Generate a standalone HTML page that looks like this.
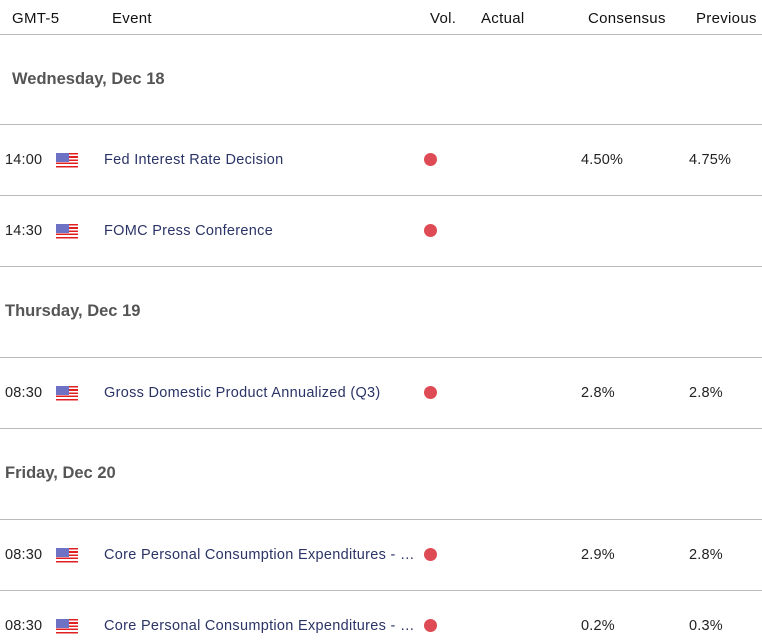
<!DOCTYPE html>
<html><head><meta charset="utf-8"><style>
body{margin:0;width:762px;height:643px;overflow:hidden;background:#fff;font-family:"Liberation Sans",sans-serif;position:relative}
.a{position:absolute;white-space:nowrap}
.h{font-size:15px;color:#111;top:10px;letter-spacing:0.3px}
.ln{position:absolute;left:0;width:762px;height:1px;background:#b9bdbd}
.d{font-size:16.5px;font-weight:bold;color:#555}
.t{font-size:14.5px;color:#222;letter-spacing:0.2px}
.e{font-size:14.5px;color:#2b3466;letter-spacing:0.3px}
.dot{position:absolute;width:13px;height:13px;border-radius:50%;background:#de4b55}
.fl{position:absolute;width:22px;height:15px;background:repeating-linear-gradient(#e02020 0 1.6px,#fff 1.6px 3.2px)}
.fl:before{content:"";position:absolute;left:0;top:0;width:13px;height:9px;background:#3a3fb0;background-image:radial-gradient(#fff 0.5px,transparent 0.8px);background-size:2px 2px}
</style></head><body>
<div class="a h" style="left:12px">GMT-5</div>
<div class="a h" style="left:112px">Event</div>
<div class="a h" style="left:430px">Vol.</div>
<div class="a h" style="left:481px">Actual</div>
<div class="a h" style="left:588px">Consensus</div>
<div class="a h" style="left:696px">Previous</div>
<div class="ln" style="top:34px"></div>
<div class="a d" style="left:12px;top:70px">Wednesday, Dec 18</div>
<div class="ln" style="top:124px"></div>
<div class="a t" style="left:5px;top:152px">14:00</div><div class="fl" style="left:56px;top:153px"></div>
<div class="a e" style="left:104px;top:152px">Fed Interest Rate Decision</div><div class="dot" style="left:424px;top:153px"></div>
<div class="a t" style="left:581px;top:152px">4.50%</div><div class="a t" style="left:689px;top:152px">4.75%</div>
<div class="ln" style="top:195px"></div>
<div class="a t" style="left:5px;top:223px">14:30</div><div class="fl" style="left:56px;top:224px"></div>
<div class="a e" style="left:104px;top:223px">FOMC Press Conference</div><div class="dot" style="left:424px;top:224px"></div>
<div class="ln" style="top:266px"></div>
<div class="a d" style="left:5px;top:302px">Thursday, Dec 19</div>
<div class="ln" style="top:357px"></div>
<div class="a t" style="left:5px;top:385px">08:30</div><div class="fl" style="left:56px;top:386px"></div>
<div class="a e" style="left:104px;top:385px">Gross Domestic Product Annualized (Q3)</div><div class="dot" style="left:424px;top:386px"></div>
<div class="a t" style="left:581px;top:385px">2.8%</div><div class="a t" style="left:689px;top:385px">2.8%</div>
<div class="ln" style="top:428px"></div>
<div class="a d" style="left:5px;top:464px">Friday, Dec 20</div>
<div class="ln" style="top:519px"></div>
<div class="a t" style="left:5px;top:547px">08:30</div><div class="fl" style="left:56px;top:548px"></div>
<div class="a e" style="left:104px;top:547px">Core Personal Consumption Expenditures - …</div><div class="dot" style="left:424px;top:548px"></div>
<div class="a t" style="left:581px;top:547px">2.9%</div><div class="a t" style="left:689px;top:547px">2.8%</div>
<div class="ln" style="top:590px"></div>
<div class="a t" style="left:5px;top:618px">08:30</div><div class="fl" style="left:56px;top:619px"></div>
<div class="a e" style="left:104px;top:618px">Core Personal Consumption Expenditures - …</div><div class="dot" style="left:424px;top:619px"></div>
<div class="a t" style="left:581px;top:618px">0.2%</div><div class="a t" style="left:689px;top:618px">0.3%</div>
</body></html>
